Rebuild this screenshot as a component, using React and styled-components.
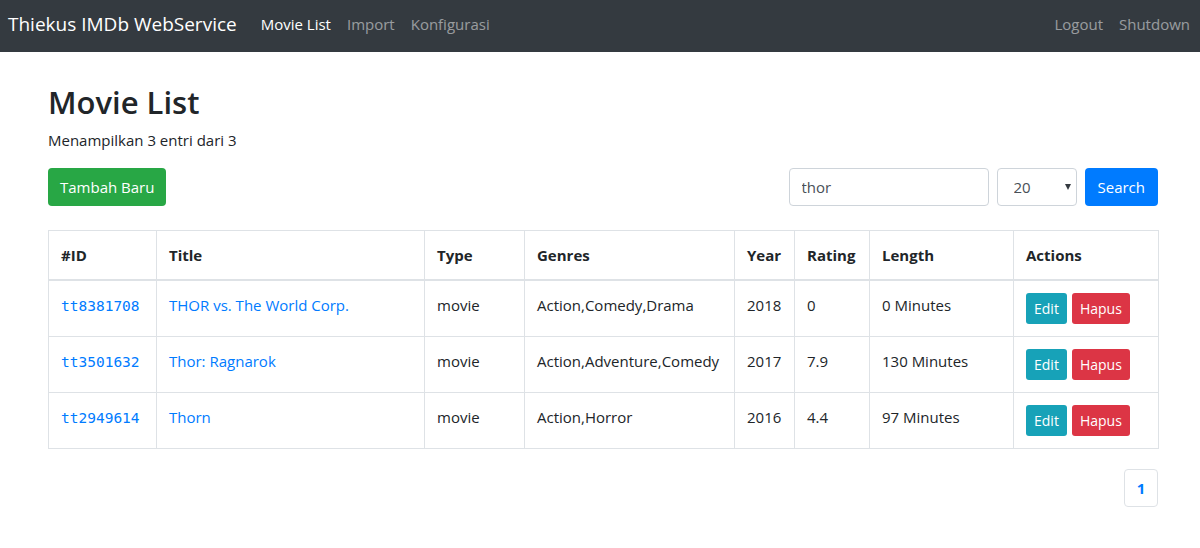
import styled, { createGlobalStyle } from 'styled-components';


// Styles
const GlobalStyle = createGlobalStyle`
    *{
        box-sizing:border-box;
    }
    body{
        margin:0;
        color:#212529;
        background-color:#fff;
        font-family:"Open Sans", "Noto Sans", sans-serif;
        font-size:15px;
        line-height:24px;
    }
`
const Navbar = styled.nav`
    height:52px;
    display:flex;
    padding:0 2px 4px 8px;
    align-items:center;
    background-color:#343a40;
`
const Brand = styled.a`
    color:#fff;
    font-size:19px;
    margin-right:16px;
    text-decoration:none;
`
const NavList = styled.div`
    display:flex;
    flex:1;
`
const NavRight = styled.div`
    display:flex;
    margin-left:auto;
`
const NavLink = styled.a`
    padding:8px;
    font-size:15px;
    text-decoration:none;
    color:${props => props.active ? '#fff' : 'rgba(255,255,255,0.5)'};
`
const Container = styled.main`
    width:1110px;
    margin-left:48px;
    padding-top:32px;
`
const Heading = styled.h1`
    margin:0 0 7px;
    font-size:31px;
    font-weight:600;
    line-height:1.2;
`
const Info = styled.p`
    margin:0 0 16px;
`
const Toolbar = styled.div`
    display:flex;
    align-items:center;
    justify-content:space-between;
    margin-bottom:24px;
`
const SearchForm = styled.form`
    display:flex;
    gap:8px;
`
const Button = styled.button`
    height:${props => props.small ? '31px' : '38px'};
    border:none;
    color:#fff;
    cursor:pointer;
    font-family:inherit;
    font-size:${props => props.small ? '14px' : '15px'};
    padding:${props => props.small ? '0 8px' : '0 12px'};
    border-radius:${props => props.small ? '3px' : '4px'};
    background-color:${props => props.color};
`
const SearchButton = styled(Button)`
    padding:0 13px;
`
const Input = styled.input`
    width:200px;
    height:38px;
    padding:6px 12px;
    font-family:inherit;
    font-size:15px;
    color:#495057;
    border:1px solid #ced4da;
    border-radius:4px;
    outline:none;
`
const SelectBox = styled.div`
    position:relative;
    width:80px;
`
const Select = styled.select`
    width:100%;
    height:38px;
    padding:6px 12px 6px 16px;
    font-family:inherit;
    font-size:15px;
    color:#495057;
    background:#fff;
    border:1px solid #ced4da;
    border-radius:4px;
    appearance:none;
    outline:none;
`
const Caret = styled.span`
    position:absolute;
    top:16px;
    right:6px;
    border-left:3.5px solid transparent;
    border-right:3.5px solid transparent;
    border-top:6px solid #343a40;
    pointer-events:none;
`
const Table = styled.table`
    width:100%;
    table-layout:fixed;
    border-collapse:collapse;
    margin-bottom:20px;
    border:1px solid #dee2e6;
`
const Th = styled.th`
    text-align:left;
    padding:12px;
    font-weight:700;
    width:${props => props.w}px;
    border:1px solid #dee2e6;
    border-bottom-width:2px;
`
const Td = styled.td`
    padding:12px;
    vertical-align:top;
    white-space:nowrap;
    border:1px solid #dee2e6;
`
const Link = styled.a`
    color:#007bff;
    text-decoration:none;
`
const Code = styled.code`
    color:#007bff;
    font-size:14.5px;
    font-family:"DejaVu Sans Mono", "Liberation Mono", monospace;
`
const Actions = styled.div`
    display:flex;
    gap:5px;
`
const Pagination = styled.ul`
    display:flex;
    justify-content:flex-end;
    list-style:none;
    margin:0;
    padding:0;
`
const PageItem = styled.li`
    width:34px;
    height:38px;
    display:flex;
    align-items:center;
    justify-content:center;
    color:#007bff;
    font-weight:700;
    border:1px solid #dee2e6;
    border-radius:4px;
`


const columns = [
    ['#ID', 108], ['Title', 268], ['Type', 100], ['Genres', 210],
    ['Year', 60], ['Rating', 75], ['Length', 144], ['Actions', 145]
];

const movies = [
    {id:'tt8381708', title:'THOR vs. The World Corp.', type:'movie', genres:'Action,Comedy,Drama', year:2018, rating:'0', length:0},
    {id:'tt3501632', title:'Thor: Ragnarok', type:'movie', genres:'Action,Adventure,Comedy', year:2017, rating:'7.9', length:130},
    {id:'tt2949614', title:'Thorn', type:'movie', genres:'Action,Horror', year:2016, rating:'4.4', length:97}
];


// Main Function
const App = () => {
  return (
    <>
        <GlobalStyle/>
        <Navbar>
            <Brand href="#">Thiekus IMDb WebService</Brand>
            <NavList>
                <NavLink href="#" active>Movie List</NavLink>
                <NavLink href="#">Import</NavLink>
                <NavLink href="#">Konfigurasi</NavLink>
            </NavList>
            <NavRight>
                <NavLink href="#">Logout</NavLink>
                <NavLink href="#">Shutdown</NavLink>
            </NavRight>
        </Navbar>
        <Container>
            <Heading>Movie List</Heading>
            <Info>Menampilkan 3 entri dari 3</Info>
            <Toolbar>
                <Button color="#28a745">Tambah Baru</Button>
                <SearchForm onSubmit={e => e.preventDefault()}>
                    <Input defaultValue="thor"/>
                    <SelectBox>
                        <Select defaultValue="20">
                            <option>10</option>
                            <option>20</option>
                            <option>50</option>
                        </Select>
                        <Caret/>
                    </SelectBox>
                    <SearchButton color="#007bff">Search</SearchButton>
                </SearchForm>
            </Toolbar>
            <Table>
                <thead>
                    <tr>
                        {columns.map(([label, w]) => <Th key={label} w={w}>{label}</Th>)}
                    </tr>
                </thead>
                <tbody>
                    {movies.map(m => (
                        <tr key={m.id}>
                            <Td><Link href="#"><Code>{m.id}</Code></Link></Td>
                            <Td><Link href="#">{m.title}</Link></Td>
                            <Td>{m.type}</Td>
                            <Td>{m.genres}</Td>
                            <Td>{m.year}</Td>
                            <Td>{m.rating}</Td>
                            <Td>{m.length} Minutes</Td>
                            <Td>
                                <Actions>
                                    <Button small color="#17a2b8">Edit</Button>
                                    <Button small color="#dc3545">Hapus</Button>
                                </Actions>
                            </Td>
                        </tr>
                    ))}
                </tbody>
            </Table>
            <Pagination>
                <PageItem>1</PageItem>
            </Pagination>
        </Container>
    </>
  )
}


// Export
export default App;
